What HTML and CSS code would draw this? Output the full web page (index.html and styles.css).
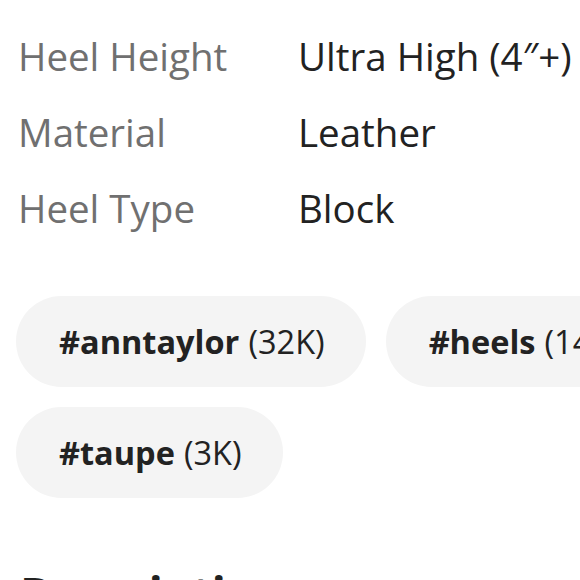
FILE: index.html
```html
<!DOCTYPE html>
<html>
<head>
<meta charset="utf-8">
<link rel="stylesheet" href="styles.css">
</head>
<body>
<div class="page">
  <div class="attrs">
    <div class="label">Heel Height</div><div class="value">Ultra High (4″+)</div>
    <div class="label">Material</div><div class="value">Leather</div>
    <div class="label">Heel Type</div><div class="value">Block</div>
  </div>
  <div class="tags">
    <div class="tag-row">
      <div class="tag"><b>#anntaylor</b> (32K)</div>
      <div class="tag"><b>#heels</b> (14K)</div>
    </div>
    <div class="tag-row">
      <div class="tag"><b>#taupe</b> (3K)</div>
    </div>
  </div>
  <h2 class="heading">Description</h2>
</div>
</body>
</html>
```
FILE: styles.css
```css
html, body { margin: 0; padding: 0; background: #fff; }
body { font-family: "Open Sans", "Noto Sans", sans-serif; overflow: hidden; width: 580px; height: 580px; }
.page { padding: 18px 0 0 18px; }
.attrs {
  display: grid;
  grid-template-columns: 280px auto;
  font-size: 38.5px;
  line-height: 76px;
}
.label { color: #707070; white-space: nowrap; }
.value { color: #222; white-space: nowrap; }
.tags {
  display: flex;
  flex-direction: column;
  gap: 20px;
  margin-top: 50px;
  margin-left: -2px;
}
.tag-row { display: flex; gap: 20px; }
.tag {
  flex: none;
  background: #f4f4f4;
  border-radius: 46px;
  height: 91px;
  padding: 0 41px 0 43px;
  display: flex;
  align-items: center;
  font-size: 32.5px;
  color: #222;
  white-space: nowrap;
}
.tag b { font-weight: 700; margin-right: 9px; }
.heading { margin: 72px 0 0 2px; font-size: 46px; font-weight: 700; color: #222; line-height: 1; }
```
